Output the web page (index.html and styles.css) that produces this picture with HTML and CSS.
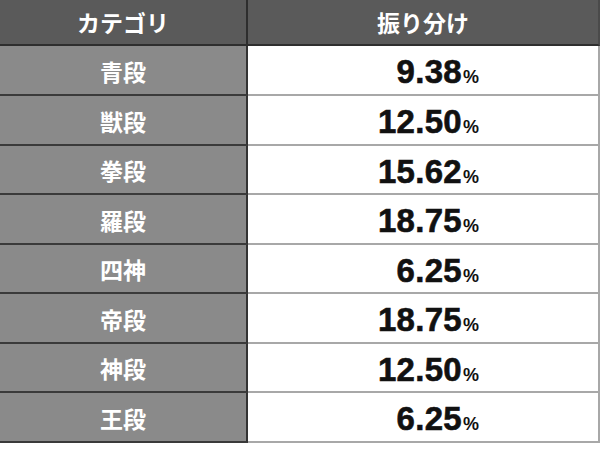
FILE: index.html
```html
<!DOCTYPE html>
<html lang="ja">
<head>
<meta charset="utf-8">
<link rel="stylesheet" href="styles.css">
</head>
<body>
<div class="table">
  <div class="head left">カテゴリ</div>
  <div class="head right">振り分け</div>

  <div class="label">青段</div><div class="value"><span class="num">9.38</span><span class="pct">%</span></div>
  <div class="label">獣段</div><div class="value"><span class="num">12.50</span><span class="pct">%</span></div>
  <div class="label">拳段</div><div class="value"><span class="num">15.62</span><span class="pct">%</span></div>
  <div class="label">羅段</div><div class="value"><span class="num">18.75</span><span class="pct">%</span></div>
  <div class="label">四神</div><div class="value"><span class="num">6.25</span><span class="pct">%</span></div>
  <div class="label">帝段</div><div class="value"><span class="num">18.75</span><span class="pct">%</span></div>
  <div class="label">神段</div><div class="value"><span class="num">12.50</span><span class="pct">%</span></div>
  <div class="label">王段</div><div class="value"><span class="num">6.25</span><span class="pct">%</span></div>
</div>
</body>
</html>
```

FILE: styles.css
```css
html, body {
  margin: 0;
  padding: 0;
  background: #ffffff;
}
body {
  width: 600px;
  height: 454px;
  overflow: hidden;
}
.table {
  display: grid;
  grid-template-columns: 248px 352px;
  grid-template-rows: 46px 50px 50px 49px 50px 49px 50px 49px 50px;
}
.head {
  background: #5a5a5a;
  color: #ffffff;
  font-family: "Noto Sans CJK JP", sans-serif;
  font-weight: 700;
  font-size: 23px;
  display: flex;
  align-items: center;
  justify-content: center;
  box-sizing: border-box;
  border-bottom: 2px solid #2e2e2e;
}
.head.left {
  border-right: 2px solid #2e2e2e;
}
.head.right {
  border-right: 2px solid #4a4a4a;
}
.label {
  background: #8a8a8a;
  color: #ffffff;
  font-family: "Noto Sans CJK JP", sans-serif;
  font-weight: 700;
  font-size: 23px;
  display: flex;
  align-items: center;
  justify-content: center;
  box-sizing: border-box;
  border-right: 2px solid #333333;
  border-bottom: 2px solid #3a3a3a;
  padding-top: 1px;
}
.value {
  background: #ffffff;
  color: #111111;
  font-family: "Liberation Sans", Arial, sans-serif;
  font-weight: 700;
  display: flex;
  align-items: baseline;
  justify-content: flex-end;
  box-sizing: border-box;
  border-right: 2px solid #a8a8a8;
  border-bottom: 2px solid #a8a8a8;
  padding-right: 119px;
  padding-top: 8px;
}
.num {
  font-size: 33px;
  letter-spacing: 0.3px;
  line-height: 36px;
  -webkit-text-stroke: 0.6px #111111;
}
.pct {
  font-size: 18px;
  margin-left: 1px;
}
```
